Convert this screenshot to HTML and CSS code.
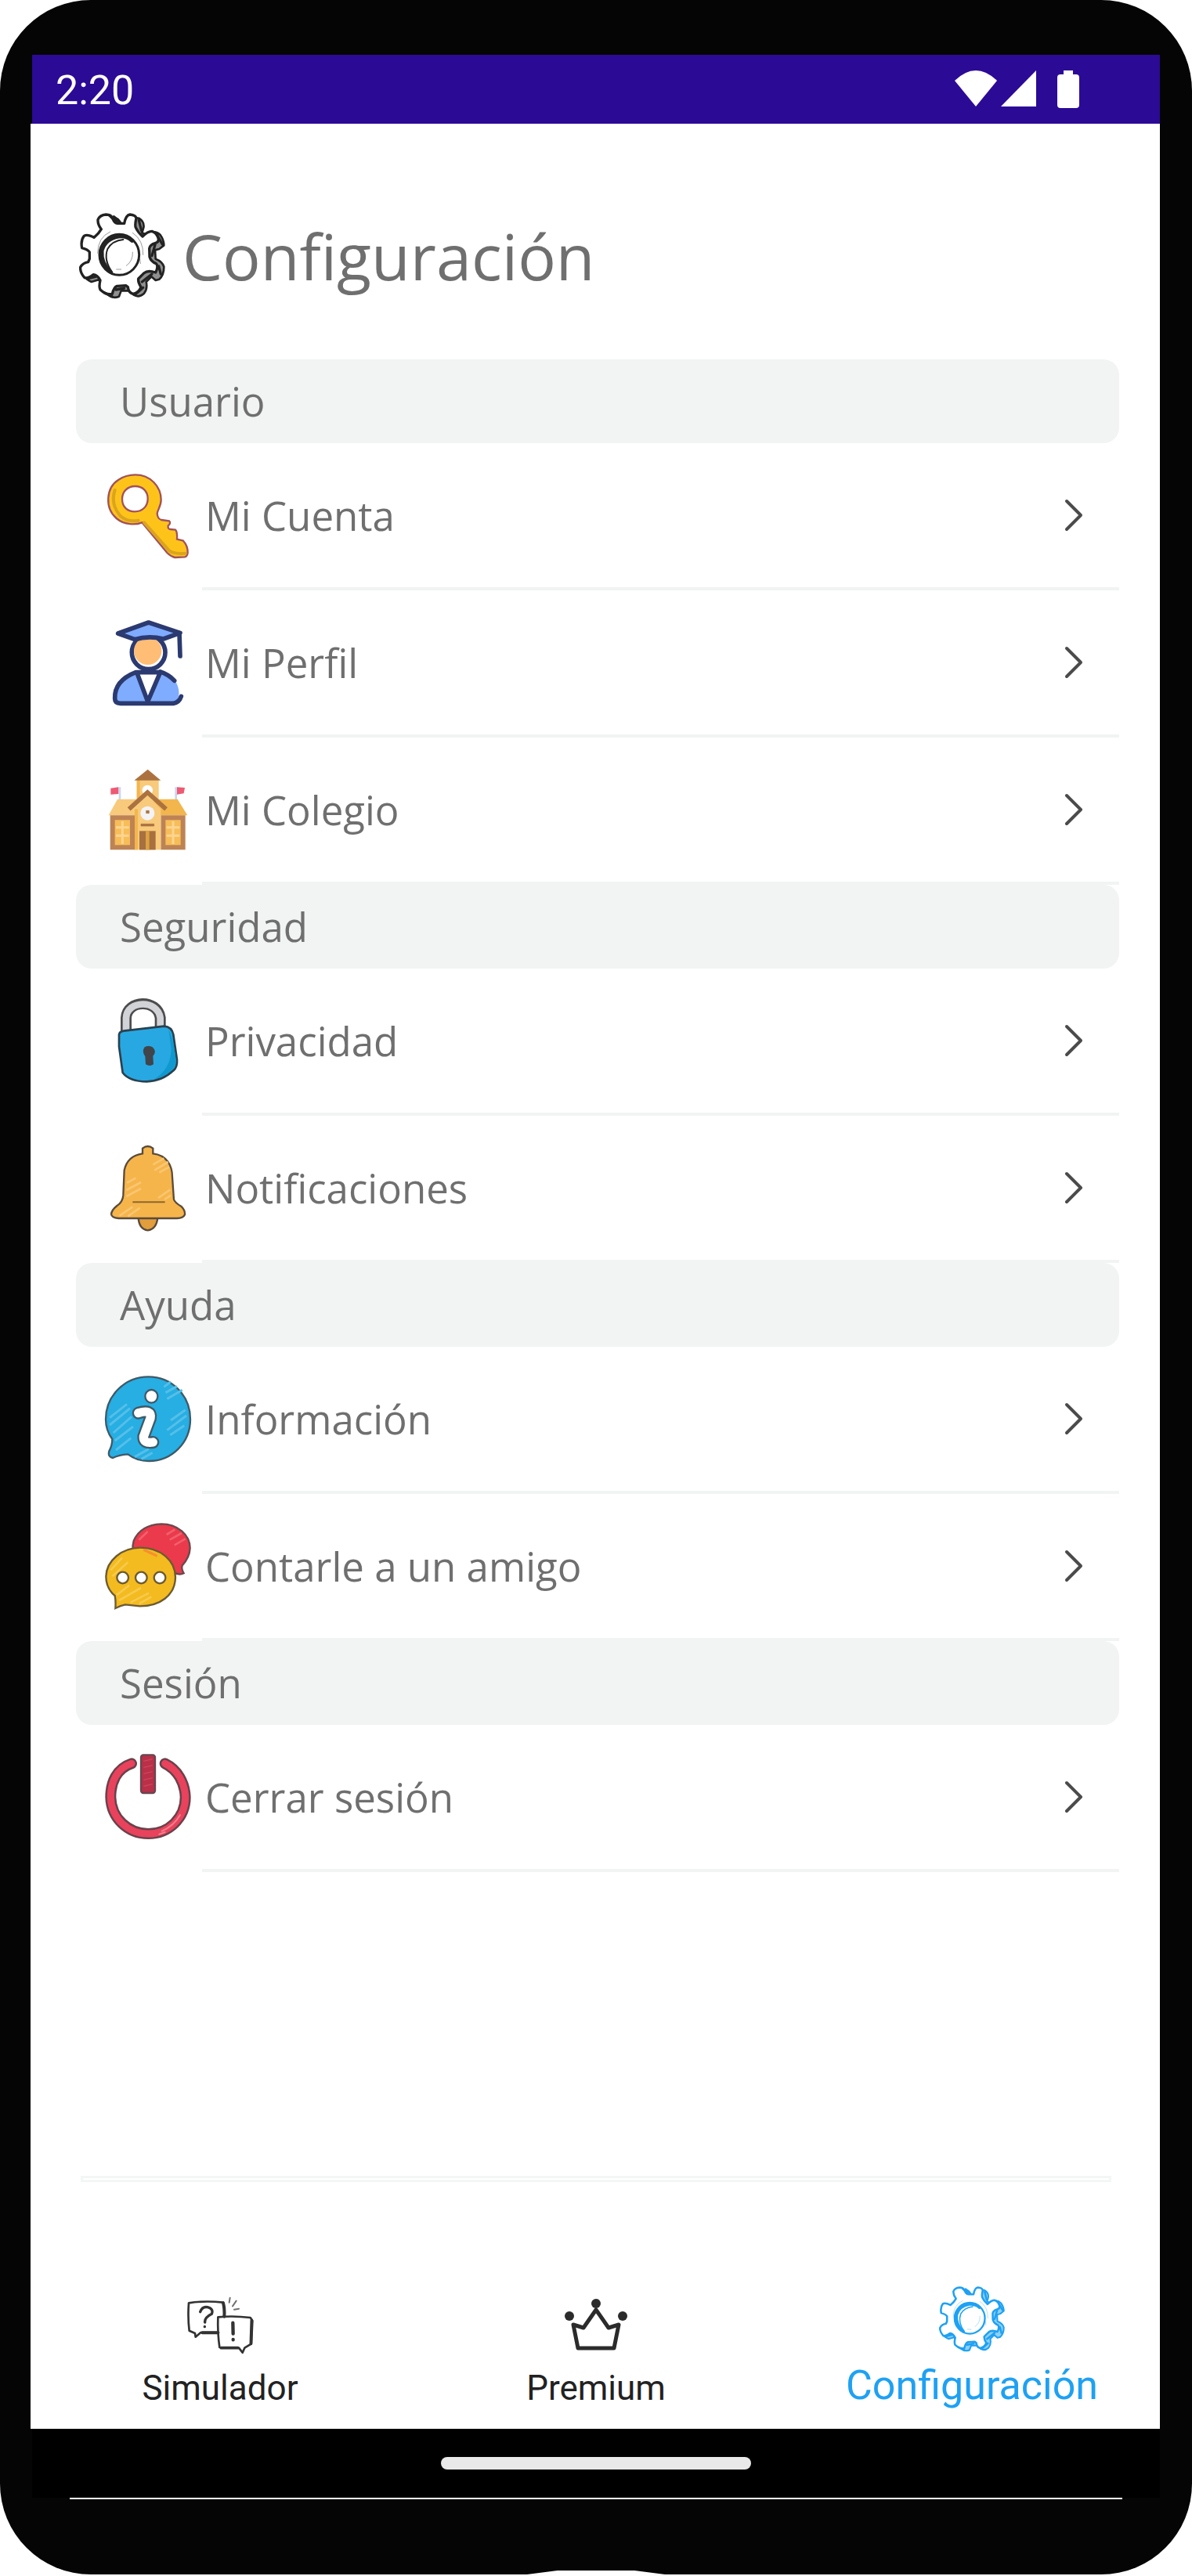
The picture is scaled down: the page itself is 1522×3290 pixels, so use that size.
FILE: index.html
```html
<!DOCTYPE html>
<html lang="es">
<head>
    <meta charset="UTF-8">
    <meta name="viewport" content="width=device-width, initial-scale=1.0">
    <title>Configuración</title>
    <link rel="stylesheet" href="styles.css">
</head>
<body>
    <!-- Engranaje compartido por el título y la barra inferior -->
    <svg class="symbols" aria-hidden="true">
        <symbol id="gear" viewBox="33 36 330 330">
            <g stroke="currentColor" stroke-linejoin="round" stroke-linecap="round">
                <path fill="currentColor" fill-opacity=".5" stroke-width="8" d="M131 64 Q158 42 182 60 L194 76 L228 76 Q240 50 262 56 Q284 70 280 92 L274 112 L292 120 Q322 98 344 120 Q358 140 358 160 L340 174 L324 178 L326 212 Q352 222 358 242 Q358 274 340 290 L326 294 L310 280 L290 300 Q296 326 282 344 Q262 362 242 350 L226 334 L194 334 L186 356 Q160 366 140 346 Q118 326 122 310 L108 292 L80 300 Q54 288 50 270Z"/>
                <path fill="#fff" stroke-width="10" d="M105 62 Q112 44 136 42 Q156 42 162 58 Q168 76 180 76 L206 76 Q212 44 228 42 Q250 44 252 56 Q246 82 250 92 Q258 110 276 126 Q296 106 312 106 Q332 112 337 136 Q338 148 324 152 Q304 158 302 172 L303 204 Q308 222 328 230 Q338 240 326 264 Q296 254 282 266 L260 288 Q258 302 270 320 Q262 342 240 346 Q222 342 220 320 L212 314 L178 316 Q166 320 160 346 Q138 352 114 330 Q108 320 114 294 Q104 274 88 272 Q68 288 54 284 Q36 264 38 244 Q46 228 68 224 L73 212 L73 186 Q66 176 44 170 Q38 142 52 124 Q64 116 90 130 Q108 116 118 98 Q104 80 105 62Z"/>
                <ellipse fill="none" stroke-width="9" cx="187" cy="196" rx="76" ry="78"/>
                <path fill="none" stroke-width="15" d="M154 262 Q116 230 120 180 Q134 134 184 126 Q214 122 236 142"/>
                <path fill="none" stroke-width="6" d="M160 264 Q126 216 142 174 Q160 142 202 138"/>
                <path fill="none" stroke-width="3" opacity=".45" d="M104 190 Q104 130 152 108 M238 112 Q280 140 278 196 M238 186 Q240 220 214 238 M176 252 L194 252 M266 214 L268 230"/>
                <path fill="none" stroke-width="10" d="M150 46 L176 72 M166 50 L188 70 M262 64 L272 104 M330 118 L352 156 M324 158 L312 200 M338 240 L346 270 M312 270 L274 300 M64 288 L96 280 M278 322 L248 348 M206 324 L174 330 M130 342 L160 356"/>
            </g>
        </symbol>
        <symbol id="chevron" viewBox="0 0 24 44">
            <path d="M3 4 L21 22 L3 40" fill="none" stroke="#4b4b4b" stroke-width="4" stroke-linecap="round" stroke-linejoin="round"/>
        </symbol>
    </svg>

    <div class="device">
        <div class="status-bar">
            <span class="time">2:20</span>
            <svg class="status-icons" viewBox="0 0 160 48" fill="#fff" aria-hidden="true">
                <path d="M0 13 Q27 -13 54 13 L27 46Z"/>
                <path d="M104 0 V46 H59Z"/>
                <path d="M139 0 H151 V5 H155 Q159 5 159 9 V44 Q159 48 155 48 H135 Q131 48 131 44 V9 Q131 5 135 5 H139Z"/>
            </svg>
        </div>

        <div class="app">
            <main class="content">
                <header class="page-title">
                    <svg class="title-icon" aria-hidden="true"><use href="#gear"/></svg>
                    <h1>Configuración</h1>
                </header>

                <!-- Usuario -->
                <section>
                    <h2>Usuario</h2>
                    <a class="row" href="#">
                        <svg class="row-icon" viewBox="162 549 330 330" aria-hidden="true">
                            <path d="M278 559 C336 559 377 604 377 655 C377 680 364 692 362 708 Q364 728 378 732 L408 736 Q416 744 404 754 Q402 768 414 768 L432 770 Q440 778 438 806 L462 812 Q480 832 479 858 Q478 872 468 874 L430 876 Q414 872 400 858 L304 742 C280 752 236 752 206 726 C160 686 166 608 214 578 Q242 559 278 559Z M278 603 C248 603 228 624 228 652 C228 684 250 700 276 700 C306 700 326 680 326 650 C326 622 306 603 278 603Z" fill="#fec319" fill-rule="evenodd" stroke="#a1525a" stroke-width="7"/>
                            <path d="M200 618 Q182 672 222 718 Q250 742 290 734 M312 742 L408 850 Q424 864 470 860" fill="none" stroke="#dba41f" stroke-width="12" stroke-linecap="round"/>
                        </svg>
                        <span class="row-body">Mi Cuenta<svg class="chevron" aria-hidden="true"><use href="#chevron"/></svg></span>
                    </a>
                    <a class="row" href="#">
                        <svg class="row-icon" viewBox="162 63 330 330" aria-hidden="true">
                            <g stroke="#2b3a70" stroke-width="17" stroke-linejoin="round" stroke-linecap="round">
                                <circle cx="329" cy="190" r="64" fill="#fff"/>
                                <circle cx="326" cy="184" r="53" fill="#ffbd75" stroke="none"/>
                                <path d="M212 117 L329 75 L450 115 L386 138 Q329 124 276 140Z" fill="#7facff"/>
                                <path d="M447 116 L450 204" fill="none"/>
                                <path d="M280 266 Q198 298 199 368 Q200 386 222 386 L326 386 L428 386 Q462 350 430 296 Q406 274 374 264Z" fill="#7facff" stroke="none"/>
                                <path d="M284 266 L326 378 L374 266Z" fill="#fff"/>
                                <path d="M280 266 Q198 298 200 366 Q200 385 222 385 L424 385 Q446 382 454 358 M374 264 Q406 274 428 298" fill="none"/>
                            </g>
                        </svg>
                        <span class="row-body">Mi Perfil<svg class="chevron" aria-hidden="true"><use href="#chevron"/></svg></span>
                    </a>
                    <a class="row" href="#">
                        <svg class="row-icon" viewBox="162 627 330 330" aria-hidden="true">
                            <path d="M219 706 V756 M434 706 V756" stroke="#c8d7f2" stroke-width="8"/>
                            <path d="M184 710 L214 706 V732 L184 734Z M438 706 L468 708 L464 730 L438 734Z" fill="#ee5a73"/>
                            <path d="M210 752 H326 V814 H176Z" fill="#f8ca7b"/>
                            <path d="M326 752 H440 L478 814 H326Z" fill="#f3b64c"/>
                            <path d="M284 678 H368 V760 H284Z" fill="#f8ca7b"/>
                            <path d="M284 678 H296 V760 H284Z" fill="#f3b64c"/>
                            <path d="M326 638 L376 680 H274Z" fill="#ab7240"/>
                            <circle cx="325" cy="718" r="20" fill="#fff"/>
                            <path d="M182 814 H276 V946 H182Z M376 814 H470 V946 H376Z" fill="#bd8355"/>
                            <path d="M200 832 H258 V928 H200Z M394 832 H452 V928 H394Z" fill="#f6bd58"/>
                            <path d="M229 836 V924 M204 860 H254 M204 892 H254 M423 836 V924 M398 860 H448 M398 892 H448" stroke="#fdd590" stroke-width="9"/>
                            <path d="M276 790 L326 736 L376 790 V946 H276Z" fill="#f8ca7b"/>
                            <path d="M276 790 H288 V946 H276Z" fill="#f3b64c"/>
                            <path d="M254 790 L325 726 L396 790" fill="none" stroke="#ab7240" stroke-width="17"/>
                            <circle cx="325" cy="806" r="27" fill="#f4f3f5"/>
                            <path d="M320 796 H331 V806 H320Z M300 847 H350 V855 H300Z" fill="#ab7240" stroke="#ab7240" stroke-width="2"/>
                            <path d="M294 874 H356 V946 H294Z" fill="#a8703f"/>
                            <path d="M318 874 H332 V946 H318Z" fill="#dca243"/>
                        </svg>
                        <span class="row-body">Mi Colegio<svg class="chevron" aria-hidden="true"><use href="#chevron"/></svg></span>
                    </a>
                </section>

                <!-- Seguridad -->
                <section>
                    <h2>Seguridad</h2>
                    <a class="row" href="#">
                        <svg class="row-icon" viewBox="162 102 330 330" aria-hidden="true">
                            <path d="M243 230 V180 C246 110 364 106 374 180 V220" fill="none" stroke="#4c4c4e" stroke-width="42"/>
                            <path d="M243 232 V180 C246 112 364 108 374 180 V222" fill="none" stroke="#d2d3d6" stroke-width="26"/>
                            <path d="M216 244 Q218 232 234 230 L388 212 Q418 214 424 244 L438 340 Q440 370 424 382 Q382 422 322 424 Q256 424 230 390 L216 290Z" fill="#28a8e2" stroke="#29414f" stroke-width="8"/>
                            <path d="M406 226 Q422 250 434 340 Q434 366 418 380 Q386 408 352 414 Q414 376 416 300Z" fill="#0f99cf"/>
                            <path d="M318 358 L316 328 Q302 308 314 292 Q328 284 344 292 Q362 308 346 326 L348 358 Q334 368 318 358Z" fill="#3f454b"/>
                        </svg>
                        <span class="row-body">Privacidad<svg class="chevron" aria-hidden="true"><use href="#chevron"/></svg></span>
                    </a>
                    <a class="row" href="#">
                        <svg class="row-icon" viewBox="162 666 330 330" aria-hidden="true">
                            <path d="M290 944 Q292 990 326 994 Q360 990 364 944Z" fill="#e29d3c" stroke="#5a4b3b" stroke-width="7"/>
                            <path d="M306 700 V680 Q326 664 346 680 V700 C398 706 420 744 420 790 L426 876 Q430 888 454 902 Q470 918 468 934 Q462 948 438 948 H214 Q188 946 186 932 Q188 916 208 900 Q230 886 232 860 L236 764 Q248 708 306 700Z" fill="#f6b54b" stroke="#5a4b3b" stroke-width="7"/>
                            <path d="M346 742 L388 718 M352 764 L404 732 M370 772 L408 752 M246 812 L280 794 M244 840 L300 810 M244 864 L300 834 M366 870 L412 838 M390 876 L414 860 M218 938 L268 904 M250 940 L296 908" stroke="#f9c672" stroke-width="8"/>
                            <path d="M268 886 H392" stroke="#8c662f" stroke-width="6"/>
                        </svg>
                        <span class="row-body">Notificaciones<svg class="chevron" aria-hidden="true"><use href="#chevron"/></svg></span>
                    </a>
                </section>

                <!-- Ayuda -->
                <section>
                    <h2>Ayuda</h2>
                    <a class="row" href="#">
                        <svg class="row-icon" viewBox="162 111 330 330" aria-hidden="true">
                            <path d="M328 115 C420 115 489 188 489 278 C489 368 418 438 330 438 Q284 438 250 412 Q216 414 192 426 Q172 422 178 400 Q190 378 190 354 C174 332 165 310 165 278 C165 188 238 115 328 115Z" fill="#27aee3" stroke="#3e5a68" stroke-width="7"/>
                            <path d="M388 154 L414 134 M394 176 L438 152 M400 200 L458 166 M180 272 L246 220 M180 300 L258 236 M194 330 L264 268 M200 360 L270 306 M204 396 L262 350 M414 282 L470 242 M400 320 L474 264 M412 338 L466 302 M276 422 L330 392 M302 430 L344 406" stroke="#55bfe9" stroke-width="9"/>
                            <ellipse cx="340" cy="190" rx="24" ry="25" fill="#fff" stroke="#3e5a68" stroke-width="7"/>
                            <path d="M290 254 Q342 238 336 274 L310 344 Q308 372 346 366" fill="none" stroke="#3e5a68" stroke-width="48" stroke-linecap="round"/>
                            <path d="M290 254 Q342 238 336 274 L310 344 Q308 372 346 366" fill="none" stroke="#fff" stroke-width="34" stroke-linecap="round"/>
                        </svg>
                        <span class="row-body">Información<svg class="chevron" aria-hidden="true"><use href="#chevron"/></svg></span>
                    </a>
                    <a class="row" href="#">
                        <svg class="row-icon" viewBox="162 675 330 330" aria-hidden="true">
                            <path d="M378 679 C440 679 488 720 488 772 Q486 808 458 838 Q454 852 464 868 Q450 876 424 866 L280 800 Q262 780 272 744 Q298 682 378 679Z" fill="#eb3a4b" stroke="#69494e" stroke-width="7"/>
                            <path d="M398 720 L430 700 M410 740 L456 714 M428 760 L470 736 M292 740 L326 708" stroke="#f15f6c" stroke-width="8"/>
                            <path d="M298 770 C376 770 432 820 432 884 C430 954 372 994 296 994 L240 988 Q222 992 202 1002 Q204 974 200 954 Q166 926 166 880 C168 820 226 770 298 770Z" fill="#f3bb1f" stroke="#6c5a32" stroke-width="7"/>
                            <path d="M184 856 L228 808 M190 880 L250 826 M206 952 L256 914 M216 972 L300 924 M260 980 L330 944 M294 984 L340 958" stroke="#f7ca4e" stroke-width="8"/>
                            <path d="M310 778 L362 802" stroke="#f78f2d" stroke-width="10"/>
                            <g fill="#fff" stroke="#6c5a32" stroke-width="7">
                                <circle cx="230" cy="885" r="22"/>
                                <circle cx="301" cy="885" r="22"/>
                                <circle cx="372" cy="885" r="22"/>
                            </g>
                        </svg>
                        <span class="row-body">Contarle a un amigo<svg class="chevron" aria-hidden="true"><use href="#chevron"/></svg></span>
                    </a>
                </section>

                <!-- Sesión -->
                <section>
                    <h2>Sesión</h2>
                    <a class="row" href="#">
                        <svg class="row-icon" viewBox="162 120 330 330" aria-hidden="true">
                            <g fill="none" stroke-linecap="round">
                                <path d="M264 157 C206 176 184 230 184 286 C186 366 250 426 328 426 C406 426 470 366 470 286 C468 230 440 180 392 157" stroke="#6b414b" stroke-width="42"/>
                                <path d="M264 157 C206 176 184 230 184 286 C186 366 250 426 328 426 C406 426 470 366 470 286 C468 230 440 180 392 157" stroke="#e9425c" stroke-width="27"/>
                                <path d="M380 416 Q426 396 450 354 M370 428 L392 420" stroke="#f1808f" stroke-width="6"/>
                            </g>
                            <rect x="300" y="124" width="54" height="146" rx="9" fill="#b93048" stroke="#694650" stroke-width="7"/>
                            <path d="M310 148 L344 140 M310 172 L344 164 M310 196 L344 188 M310 220 L344 212 M310 244 L344 236" stroke="#cf465b" stroke-width="4"/>
                        </svg>
                        <span class="row-body">Cerrar sesión<svg class="chevron" aria-hidden="true"><use href="#chevron"/></svg></span>
                    </a>
                </section>
            </main>

            <div class="divider"></div>
            <nav class="bottom-nav">
                <a class="nav-item" href="#">
                    <svg class="nav-icon" viewBox="42 30 252 252" aria-hidden="true">
                        <g fill="none" stroke="#333" stroke-linejoin="round" stroke-linecap="round">
                            <path stroke-width="8" d="M162 207 H94 L74 224 L72 210 L50 200 Q44 150 48 94 Q110 84 180 92"/>
                            <path stroke-width="12" d="M180 94 Q186 116 184 146 M160 208 H100"/>
                            <path stroke-width="8" d="M160 148 Q220 142 284 150 L292 162 L288 250 L262 266 L254 284 L240 266 L166 264 Q158 208 160 148Z"/>
                            <path stroke-width="11" d="M289 160 L286 250 M236 266 H172"/>
                            <path stroke-width="10" d="M92 128 Q100 106 120 110 Q144 116 136 136 Q108 150 110 168 M109 184 V185"/>
                            <path stroke-width="13" d="M217 170 L218 212 M218 234 V235"/>
                            <path stroke-width="6" opacity=".7" d="M206 74 L203 92 M230 86 L216 106 M222 119 L240 116"/>
                        </g>
                    </svg>
                    <span>Simulador</span>
                </a>
                <a class="nav-item" href="#">
                    <svg class="nav-icon" viewBox="0 0 84 84" aria-hidden="true">
                        <path d="M13 49 L26 53 L42 30 L58 53 L71 49 L65 79 H19Z" fill="none" stroke="#2b2b2b" stroke-width="5" stroke-linejoin="round"/>
                        <g fill="#2b2b2b"><circle cx="8" cy="38" r="6"/><circle cx="42" cy="22" r="6"/><circle cx="76" cy="38" r="6"/></g>
                    </svg>
                    <span>Premium</span>
                </a>
                <a class="nav-item active" href="#" aria-current="page">
                    <svg class="nav-icon" aria-hidden="true"><use href="#gear"/></svg>
                    <span>Configuración</span>
                </a>
            </nav>
        </div>

        <div class="gesture-bar"><div class="handle"></div></div>
        <div class="screen-edge"></div>
        <div class="notch"></div>
    </div>
</body>
</html>
```
FILE: styles.css
```css
* {
    box-sizing: border-box;
}
body {
    margin: 0;
    padding-bottom: 2px;
    background-color: #fff;
    font-family: "Open Sans", "Noto Sans", sans-serif;
    color: #6f6f6f;
}
a {
    color: inherit;
    text-decoration: none;
}
svg {
    flex: none;
    overflow: visible;
}
.symbols {
    position: absolute;
    width: 0;
    height: 0;
}

/* Marco del teléfono */
.device {
    position: relative;
    display: flex;
    flex-direction: column;
    min-height: calc(100vh - 2px);
    padding: 70px 41px 96px;
    background-color: #050505;
    border-radius: 116px;
}
.app {
    flex: 1;
    display: flex;
    flex-direction: column;
    background-color: #fff;
    box-shadow: -2px 0 0 #fff;
}
.screen-edge {
    height: 2px;
    margin: 0 48px;
    background-color: #fff;
}
.notch {
    position: absolute;
    bottom: 0;
    left: 50%;
    width: 176px;
    height: 5px;
    margin-left: -88px;
    background-color: #fff;
    clip-path: polygon(22% 0, 78% 0, 100% 100%, 0 100%);
}

/* Barra de estado */
.status-bar {
    display: flex;
    justify-content: space-between;
    align-items: center;
    height: 88px;
    padding: 0 102px 0 30px;
    background-color: #2b0a96;
    color: #fff;
}
.time {
    font-family: Roboto, sans-serif;
    font-size: 52px;
    line-height: 60px;
    padding-top: 4px;
}
.status-icons {
    width: 160px;
    height: 48px;
}

/* Contenido */
.content {
    flex: 1;
    padding: 114px 52px 0 56px;
}
.page-title {
    display: flex;
    align-items: center;
    gap: 22px;
    height: 110px;
    margin-bottom: 77px;
    padding-left: 4px;
}
.title-icon {
    width: 110px;
    height: 110px;
    color: #222;
}
h1 {
    margin: 0;
    font-size: 81px;
    line-height: 110px;
    font-weight: 400;
}
h2 {
    margin: 0;
    padding-left: 56px;
    font-size: 51px;
    line-height: 107px;
    font-weight: 400;
    background-color: #f1f4f3;
    border-radius: 20px;
}
.row {
    display: flex;
    padding-left: 37px;
    font-size: 51px;
}
.row-icon {
    width: 110px;
    height: 110px;
    margin: 37px 14px 0 0;
}
.row-body {
    flex: 1;
    display: flex;
    align-items: center;
    justify-content: space-between;
    height: 188px;
    padding: 0 46px 0 4px;
    border-bottom: 4px solid #f1f4f3;
}
.chevron {
    width: 24px;
    height: 44px;
}

/* Navegación inferior */
.divider {
    height: 8px;
    margin: 0 62px;
    border: 3px solid #f3f6f5;
}
.bottom-nav {
    display: flex;
    padding: 133px 0 22px;
    font-family: Roboto, sans-serif;
    font-size: 44px;
    line-height: 60px;
    color: #222;
}
.nav-item {
    flex: 1;
    display: flex;
    flex-direction: column;
    align-items: center;
    gap: 16px;
}
.nav-icon {
    width: 84px;
    height: 84px;
}
.nav-item.active {
    font-size: 52px;
    line-height: 54px;
    color: #1ea1f3;
}
.gesture-bar {
    display: flex;
    align-items: center;
    justify-content: center;
    height: 88px;
    background-color: #000;
}
.handle {
    width: 396px;
    height: 16px;
    border-radius: 8px;
    background-color: #e9e9e9;
}
```
